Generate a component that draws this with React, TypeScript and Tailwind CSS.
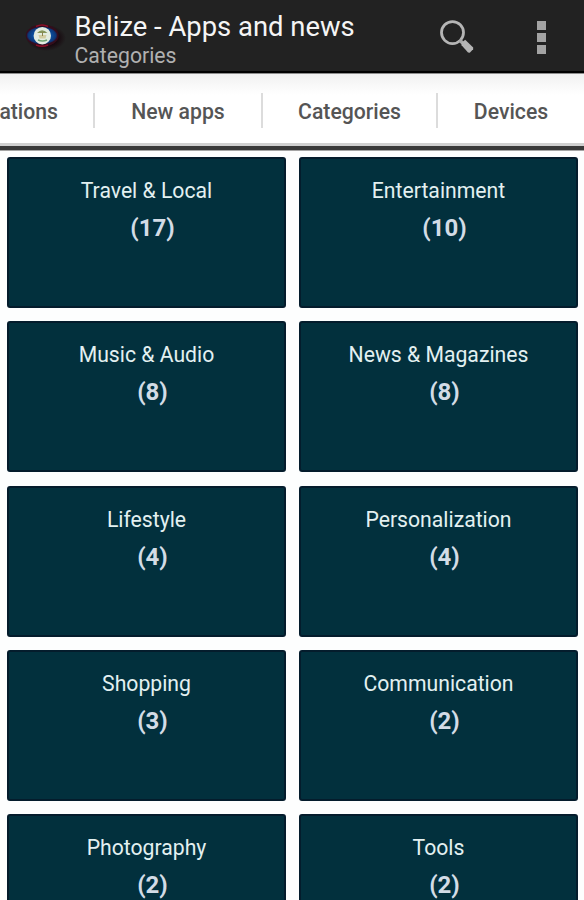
const categories = [
  { name: 'Travel & Local', count: 17 },
  { name: 'Entertainment', count: 10 },
  { name: 'Music & Audio', count: 8 },
  { name: 'News & Magazines', count: 8 },
  { name: 'Lifestyle', count: 4 },
  { name: 'Personalization', count: 4 },
  { name: 'Shopping', count: 3 },
  { name: 'Communication', count: 2 },
  { name: 'Photography', count: 2 },
  { name: 'Tools', count: 2 },
];

function FlagIcon() {
  return (
    <svg className="ml-[22px] h-9 w-[46px] shrink-0" viewBox="0 0 46 36">
      <defs>
        <radialGradient id="sea" cx="50%" cy="50%" r="50%">
          <stop offset="0.6" stopColor="#0b4c9c" />
          <stop offset="0.88" stopColor="#0d3878" />
          <stop offset="1" stopColor="#2a1230" />
        </radialGradient>
        <radialGradient id="shade">
          <stop offset="0.6" stopColor="#17090f" />
          <stop offset="1" stopColor="#222222" />
        </radialGradient>
      </defs>
      <ellipse cx="24" cy="20" rx="20" ry="13" fill="url(#shade)" />
      <ellipse cx="20.3" cy="17.5" rx="16.5" ry="11" fill="#350d1b" />
      <ellipse cx="20" cy="17.5" rx="15.5" ry="9" fill="url(#sea)" />
      <path d="M14 8.5 Q20 5.5 26 8.5M14 27 Q20 29.5 26 27" stroke="#8d1028" strokeWidth="1.6" fill="none" />
      <circle cx="20.3" cy="17.7" r="8.7" fill="#e3ece0" />
      <path d="M15 15 Q20 9.5 25.5 15Z" fill="#87965a" />
      <path d="M16.5 17h8l-1 3.5h-6z" fill="#d3cda2" />
      <path d="M20.5 14v4" stroke="#8a834e" strokeWidth="1" />
      <path d="M16 22q4.5 2 9 0" stroke="#6fa571" strokeWidth="1.6" fill="none" />
    </svg>
  );
}

function SearchIcon() {
  return (
    <svg className="h-10 w-10" viewBox="0 0 40 40">
      <circle cx="15.5" cy="15.6" r="11" fill="none" stroke="#b5b5b5" strokeWidth="2.8" />
      <path d="M22.6 23l3.5 3.5" stroke="#a8a8a8" strokeWidth="3.4" />
      <path d="M24.6 25.8l3.6-3 8 7.6-.1 1.9-3.3 3.4-1.8-.1-6.4-7.4z" fill="#b5b5b5" />
    </svg>
  );
}

export default function App() {
  return (
    <div className="flex h-[900px] w-[584px] flex-col overflow-hidden bg-[#fdfefe] font-[Roboto,sans-serif]">
      <header className="flex h-[73px] shrink-0 items-start border-b-2 border-black bg-[#222222]">
        <div className="pt-[18px]"><FlagIcon /></div>
        <div className="ml-[6.5px] flex grow flex-col pt-[10px] whitespace-nowrap">
          <h1 className="h-[34px] text-[27.4px] leading-[34px] text-[#f5f5f5]">Belize - Apps and news</h1>
          <p className="h-6 text-[21.2px] leading-6 text-[#b0b0b0]">Categories</p>
        </div>
        <div className="mr-[60px] pt-[17px]"><SearchIcon /></div>
        <div className="mr-[38px] flex flex-col gap-[3px] pt-[21px]">
          <i className="h-[9px] w-[9px] bg-[#a3a3a3]" />
          <i className="h-[9px] w-[9px] bg-[#a3a3a3]" />
          <i className="h-[9px] w-[9px] bg-[#a3a3a3]" />
        </div>
      </header>
      <nav className="flex h-[70px] shrink-0 items-center border-t border-[#8d8d8d] bg-linear-to-b from-[#f1f1f1] to-white to-30% pb-px text-[21.2px] font-medium whitespace-nowrap text-[#555555]">
        <span className="flex w-[93px] justify-end pt-[7px] pr-[35px]">ations</span>
        <span className="mt-1 h-[35px] w-0.5 bg-[#dcdcdc]" />
        <span className="w-[166px] pt-[7px] text-center">New apps</span>
        <span className="mt-1 h-[35px] w-0.5 bg-[#dcdcdc]" />
        <span className="w-[173px] pt-[7px] text-center">Categories</span>
        <span className="mt-1 h-[35px] w-0.5 bg-[#dcdcdc]" />
        <span className="w-[146px] pt-[7px] text-center">Devices</span>
      </nav>
      <div className="h-[8px] shrink-0 border-t-3 border-b border-t-[#d0d0d0] border-b-[#a5a5a5] bg-[#393939]" />
      <main className="grid shrink-0 grid-cols-[279px_279px] auto-rows-[151px] gap-x-[13px] gap-y-[13.3px] pt-[6.2px] pl-[7px]">
        {categories.map((category) => (
          <section key={category.name} className="flex flex-col items-center rounded-[3px] border-2 border-[#041c2c] bg-[#02303d] pt-[17px]">
            <h2 className="h-[30px] text-[21.2px] leading-[30px] whitespace-nowrap text-[#e3f0f1]">{category.name}</h2>
            <p className="mt-[6px] ml-[12px] text-[24px] leading-[32px] font-bold text-[#d3dce6]">({category.count})</p>
          </section>
        ))}
      </main>
    </div>
  );
}
